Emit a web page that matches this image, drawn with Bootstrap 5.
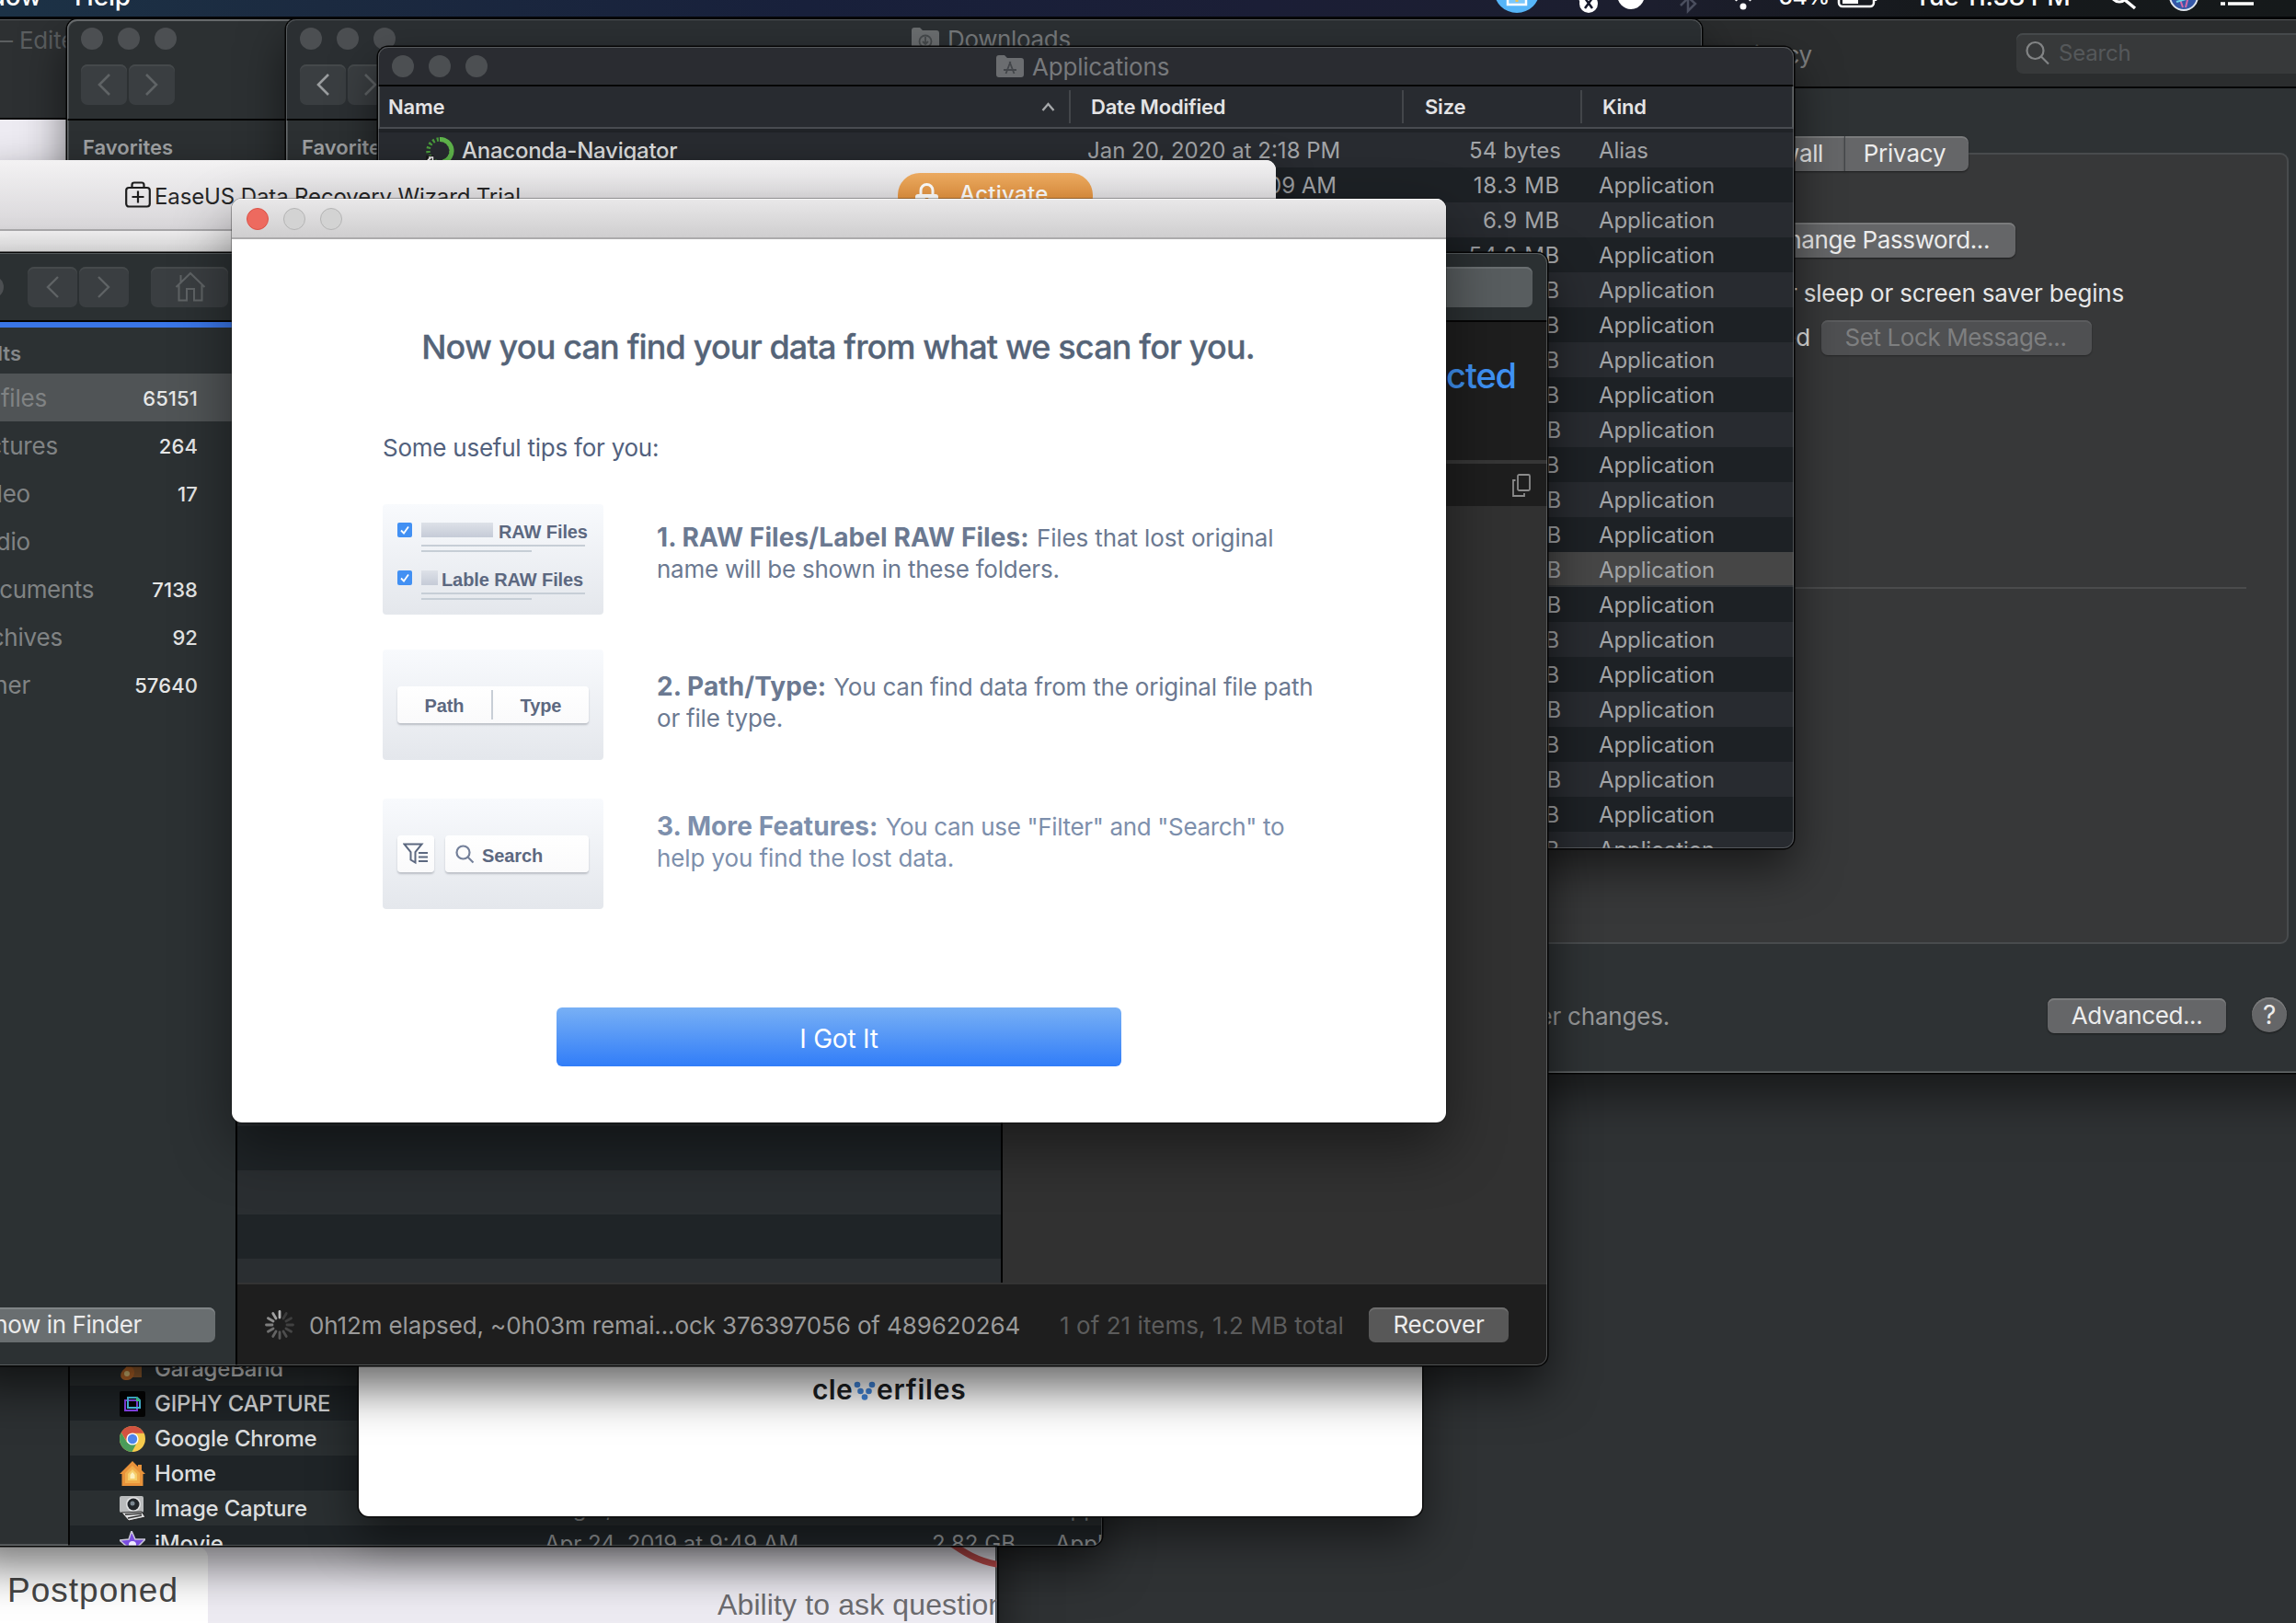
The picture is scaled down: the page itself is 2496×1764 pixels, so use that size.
<!DOCTYPE html>
<html lang="en">
<head>
<meta charset="utf-8">
<title>Desktop</title>
<link href="https://cdn.jsdelivr.net/npm/bootstrap@5.3.0/dist/css/bootstrap.min.css" rel="stylesheet">
<style>
  body { font-family: Inter, "Liberation Sans", sans-serif; font-size: 26px; line-height: 34px; letter-spacing: -.2px; background: #2f3234; color: #e6e6e6; }
  .desktop { width: 2496px; height: 1764px; white-space: nowrap; }
  svg { display: block; flex: none; }
  .win { position: absolute; overflow: hidden; border-radius: 11px; }
  .win-dark { background: #2c3032; box-shadow: inset 0 2px 0 #606365, inset 0 0 0 2px #4c5052, 0 0 0 1.5px #050505, 0 22px 50px rgba(0,0,0,.55); }
  .win-dark::after { content: ""; position: absolute; inset: 0; border: 1.5px solid rgba(130,134,136,.5); border-radius: 11px; pointer-events: none; }
  .dot { width: 24px; height: 24px; border-radius: 50%; background: #4c4f52; flex: none; }
  .tool { background: #3a3e41; border-radius: 7px; height: 44px; box-shadow: inset 0 2px 0 #45494b; flex: none; }
  .mbtn { background: #656668; color: #ececec; border-radius: 7px; height: 38px; box-shadow: inset 0 2px 0 #7a7b7c, 0 1px 2px rgba(0,0,0,.5); flex: none; display: flex; align-items: center; justify-content: center; letter-spacing: -.4px; }
  .mbtn.off { background: #4f5052; color: #7e7f80; box-shadow: inset 0 2px 0 #5b5c5e, 0 1px 2px rgba(0,0,0,.3); }

  /* menu bar */
  .menubar { position: absolute; inset: 0 0 auto 0; height: 20px; overflow: hidden; border-bottom: 2px solid #050608; background: linear-gradient(90deg, #1c3246 0, #1b2a40 14%, #18203b 35%, #1b1e36 55%, #1c1e2e 72%, #16191c 84%, #15191a 100%); color: #fff; font-size: 28px; font-weight: 500; }
  .menubar-in { height: 46px; margin-top: -27px; }

  /* browser */
  .browser { left: -60px; top: 21px; width: 1144px; height: 1760px; background: #edebf2; border-radius: 0; }
  .browser-bar { height: 109px; background: #2d3032; border-bottom: 2px solid #050505; color: #5b5e60; padding: 6px 0 0 48px; }
  .browser-page { height: 1551px; }
  .browser-foot { height: 100px; font-family: "Liberation Sans", sans-serif; }
  .postponed { flex: none; width: 286px; height: 100px; border-radius: 0 12px 0 0; background: #fff; color: #464646; font-size: 37px; letter-spacing: 1px; padding: 31px 32px 0 0; text-align: right; }
  .ask { color: #6c6b6f; font-size: 32px; letter-spacing: .12px; padding: 46px 0 0 554px; }

  /* preferences */
  .prefs { left: 1600px; top: 21px; width: 960px; height: 1145px; border-radius: 0; background: #2e3234; }
  .prefs-bar { height: 75px; background: #2b2d2e; border-bottom: 2px solid #070707; }
  .prefs-title { width: 370px; color: #7f8081; padding-top: 4px; }
  .prefs-search { width: 340px; margin-left: 222px; height: 44px; background: #37393a; color: #55585a; padding-left: 10px; gap: 9px; font-size: 24px; }
  .prefs-box { width: 888px; height: 860px; margin-top: 70px; background: #373839; border: 2px solid #484b4d; border-left: 0; border-radius: 0 9px 9px 0; }
  .prefs-box > .tabs { margin-top: -20px; width: 540px; }
  .prefs-foot { height: 156px; color: #979899; }

  /* file lists */
  .list-head { height: 46px; border-bottom: 2px solid #484b50; color: #e4e4e5; font-size: 22px; font-weight: 600; }
  .list-head > div + div { border-left: 2px solid #43464a; height: 36px; line-height: 36px; }
  .app-row { height: 38px; font-size: 24px; color: #a2a4a7; background: #282b30; padding-top: 2px; }
  .app-row:nth-child(even) { background: #1d2125; }
  .app-row.picked { background: #464646; border-bottom: 2px solid #34373a; padding-top: 4px; }
  .c-name { width: 751px; } .c-date { width: 362px; } .c-size { width: 194px; text-align: right; padding-right: 22px; letter-spacing: .7px; } .c-size.w { padding-right: 20px; }
  .c-kind { padding-left: 20px; letter-spacing: -.1px; }
  .app-row .c-date { padding-left: 20px; letter-spacing: 0; }
  .fav { font-size: 22px; font-weight: 600; color: #9fa1a3; letter-spacing: 0; }
  .apps { left: 411px; top: 51px; width: 1539px; height: 871px; background: #282b30; }
  .apps-bar { height: 43px; border-bottom: 2px solid #060606; background: #2a2c31; color: #77797c; }
  .lib { left: -40px; top: 1392px; width: 1238px; height: 288px; background: #2c3032; }
  .lib-row { height: 38px; background: #2a2f31; font-size: 24px; padding-top: 1px; }
  .lib-row:nth-child(even) { background: #1f2427; }
  .lib-name { flex: none; font-weight: 500; color: #dcdedf; width: 424px; margin-left: 10px; }
  .lib-date { width: 421px; } .lib-size { width: 134px; }
  .lib-date, .lib-size, .lib-kind { color: #8d9092; letter-spacing: 0; flex: none; }

  /* cleverfiles + EaseUS */
  .clever { left: 390px; top: 1400px; width: 1156px; height: 248px; background: #fff; box-shadow: 0 0 0 1.5px #0a0a0a, 0 22px 50px rgba(0,0,0,.5); color: #1d2124; font-size: 30px; font-weight: 600; padding: 93px 0 0 493px; }
  .ease { left: -20px; top: 174px; width: 1407px; height: 700px; background: #fff; box-shadow: 0 16px 44px rgba(0,0,0,.45); color: #262626; }
  .ease-bar { height: 77px; background: linear-gradient(#f3f2f3, #d8d6d9); border-bottom: 2px solid #a9a8aa; padding-left: 156px; font-size: 24px; letter-spacing: -.12px; }
  .ease-body { height: 40px; background: linear-gradient(#f0eff0, #dadada); }
  .activate { width: 212px; height: 50px; border-radius: 24px; background: linear-gradient(#efad62, #e38c35 75%); color: #fff; font-weight: 500; letter-spacing: .3px; margin: 14px 199px 0 auto; padding: 0 0 4px 19px; gap: 23px; align-self: flex-start; }

  /* disk drill */
  .drill { left: -40px; top: 275px; width: 1722px; height: 1209px; box-shadow: inset 0 2px 0 #606365, 0 0 0 1.5px #050505, 0 24px 52px rgba(0,0,0,.62); }
  .drill-bar { height: 75px; border-bottom: 2px solid #050505; background: #2b3032; padding: 0 16px 0 20px; }
  .drill-side { width: 298px; border-right: 2px solid #000; background: #2c3133; color: #808384; }
  .side-row { height: 52px; padding: 2px 41px 0 0; }
  .side-row > span:first-child { text-align: right; }
  .side-row.picked { background: #505456; }
  .cnt { font-size: 22px; font-weight: 500; color: #e6e7e7; letter-spacing: .1px; }
  .drill-rows { width: 832px; height: 1044px; border-right: 2px solid #000; background: linear-gradient(#1f2427 50%, #2a2e31 50%) 0 10px / 100% 96px; }
  .drill-prev { background: #313131; }
  .drill-head { height: 150px; background: #1e1e1e; color: #3f92f4; font-size: 38px; font-weight: 500; letter-spacing: -1.1px; padding: 41px 34px 0 0; text-align: right; }
  .drill-sub { height: 50px; border-top: 4px solid #363636; background: #1e1e1e; padding-right: 18px; }
  .drill-foot { height: 90px; background: #1e1e1e; border-top: 2px solid #333; padding-left: 30px; color: #9a9a9a; letter-spacing: -.12px; }

  /* tips dialog */
  .tips { left: 252px; top: 216px; width: 1320px; height: 1004px; background: #fff; box-shadow: 0 0 0 1px rgba(0,0,0,.3), 0 26px 64px rgba(0,0,0,.45); color: #52617d; }
  .tips-bar { height: 44px; background: linear-gradient(#e9e8e9, #cfcecf); border-bottom: 2px solid #acabac; padding: 1px 0 0 16px; gap: 16px; box-shadow: inset 0 1px 0 #f6f6f6; }
  .tips-bar .dot { background: #d3d3d3; border: 1.5px solid #b4b4b4; }
  .tips-bar .dot:first-child { background: #ed6a5f; border-color: #dc5247; }
  .tips-title { font-size: 36px; font-weight: 500; line-height: 44px; letter-spacing: -.85px; margin-top: 95px; padding-right: 2px; color: #556478; text-align: center; -webkit-text-stroke: .3px #556478; }
  .tips-lead { margin: 71px 0 44px 164px; letter-spacing: -.24px; }
  .tip { height: 120px; margin-left: 164px; gap: 58px; color: #6b7991; }
  .tip b { font-size: 28px; letter-spacing: .1px; margin-right: 1px; }
  .thumb { width: 240px; height: 120px; border-radius: 4px; background: linear-gradient(#f8fafd, #e4e7ec); font: 700 20px/22px "Liberation Sans", sans-serif; letter-spacing: -.1px; color: #5c6880; flex: none; padding: 16px; }
  .pill { background: linear-gradient(#fff, #fafafb); height: 40px; border-radius: 4px; box-shadow: 0 2px 2px rgba(120,125,135,.4); }
  .bars { margin-left: 26px; }
  .bars i { display: block; height: 2px; background: #c6ced6; margin-bottom: 4px; width: 178px; }
  .bars i + i { width: 120px; }
  .blk { background: linear-gradient(#dde1e8, #c5cbd7); height: 16px; margin-left: 10px; }
  .gotit { width: 614px; height: 64px; border-radius: 6px; background: linear-gradient(#78b0f5, #317df8); color: #fff; font-size: 28px; letter-spacing: -.2px; margin: 107px auto 0; border: 0; padding: 4px 0 0; }
</style>
<script src="https://cdn.jsdelivr.net/npm/bootstrap@5.3.0/dist/js/bootstrap.bundle.min.js"></script>
</head>
<body>
<main class="desktop position-relative overflow-hidden">

  <!-- browser window at the bottom left -->
  <section class="win win-dark browser">
    <div class="browser-bar">— Edited</div>
    <div class="browser-page"></div>
    <div class="browser-foot d-flex">
      <div class="postponed">Postponed</div>
      <div class="ask">Ability to ask questions</div>
    </div>
    <svg class="position-absolute" style="left:1060px;top:1640px" width="90" height="60" viewBox="0 0 90 60"><path d="M22 8C42 22 60 37 90 40" fill="none" stroke="#c9504f" stroke-width="7"/></svg>
  </section>

  <!-- Security & Privacy -->
  <section class="win win-dark prefs">
    <div class="prefs-bar d-flex align-items-center">
      <div class="prefs-title text-end">Privacy</div>
      <div class="prefs-search tool d-flex align-items-center">
        <svg width="27" height="27" viewBox="0 0 27 27" fill="none" stroke="#828485" stroke-width="2.2"><circle cx="10.500" cy="11" r="9"/><path d="M17 17.500l8 8"/></svg>
        <span>Search</span>
      </div>
    </div>
    <div class="prefs-box">
      <div class="tabs d-flex">
        <div class="mbtn rounded-end-0 justify-content-end" style="width:405px;padding-right:23px">Firewall</div>
        <div class="mbtn rounded-start-0 border-start border-dark border-opacity-50" style="width:135px;padding-right:5px;letter-spacing:-.2px">Privacy</div>
      </div>
      <div class="mbtn justify-content-end" style="width:321px;margin:56px 0 0 270px;padding-right:28px">Change Password...</div>
      <div class="text-end" style="width:709px;margin-top:22px">Require password after sleep or screen saver begins</div>
      <div class="d-flex align-items-center" style="margin-top:12px">
        <div class="text-end" style="width:368px">locked</div>
        <div class="mbtn off" style="width:294px;margin-left:12px;padding-right:2px">Set Lock Message...</div>
      </div>
      <div style="height:2px;width:842px;margin-top:252px;background:#4a4b4c"></div>
    </div>
    <div class="prefs-foot d-flex align-items-center">
      <div class="text-end" style="width:215px;padding-top:2px">further changes.</div>
      <div class="mbtn" style="width:194px;margin-left:411px">Advanced...</div>
      <div class="mbtn rounded-circle" style="width:38px;margin:-3px 0 0 28px;font-size:28px">?</div>
    </div>
  </section>

  <!-- Finder list at the lower left -->
  <section class="win win-dark lib d-flex">
    <div style="flex:none;width:116px;border-right:2px solid #060606"></div>
    <div style="flex:none;width:1122px;padding-top:76px">
      <div class="lib-row d-flex align-items-center" style="padding-left:54px">
        <svg width="28" height="28" viewBox="0 0 28 28"><rect x="7" y="0" width="17" height="23" fill="#9c6434"/><path d="M13 0v12c5 2 4 14-5 14S0 18 5 14l3-3 1-11z" fill="#c9702c"/><circle cx="8" cy="19" r="3" fill="#f1d488"/></svg>
        <span class="lib-name">GarageBand</span>
      </div>
      <div class="lib-row d-flex align-items-center" style="padding-left:54px">
        <svg width="28" height="28" viewBox="0 0 28 28"><rect width="28" height="28" rx="2" fill="#050505"/><rect x="6" y="10" width="13" height="11" fill="none" stroke="#8b45f2" stroke-width="2"/><path d="M9 7h10l3 3v8H9z" fill="none" stroke="#4cc9f0" stroke-width="2"/><path d="M18 6l5 5h-5z" fill="#46e08a"/></svg>
        <span class="lib-name">GIPHY CAPTURE</span>
      </div>
      <div class="lib-row d-flex align-items-center" style="padding-left:54px">
        <svg width="28" height="28" viewBox="0 0 28 28"><circle cx="14" cy="14" r="14" fill="#f7cb4d"/><path d="M14 0a14 14 0 0 1 12.500 7.700H14L7.500 16 1.800 7A14 14 0 0 1 14 0z" fill="#d75442"/><path d="M1.800 7l6.500 11L18 19.500 13.500 28A14 14 0 0 1 1.800 7z" fill="#4b9c5a"/><circle cx="14" cy="14" r="6.600" fill="#fff"/><circle cx="14" cy="14" r="5.200" fill="#4f86ec"/></svg>
        <span class="lib-name">Google Chrome</span>
      </div>
      <div class="lib-row d-flex align-items-center" style="padding-left:54px">
        <svg width="28" height="28" viewBox="0 0 28 28"><path d="M14 0l6 6V4h4v6l4 4h-2.500v13h-23V14H0z" fill="#e8923a"/><path d="M14 5l8 8v11H6V13z" fill="#f0ad4c"/><path d="M14 9l5 5v7H9v-7z" fill="#f6cf6c"/><path d="M14 12l2.500 3v4h-5v-4z" fill="#fdf1c0"/></svg>
        <span class="lib-name">Home</span>
      </div>
      <div class="lib-row d-flex align-items-center" style="padding-left:54px">
        <svg width="28" height="28" viewBox="0 0 28 28"><rect x="0" y="0" width="26" height="18" rx="2" fill="#b9bbbc"/><circle cx="15" cy="9" r="8" fill="#e2e3e4"/><circle cx="15" cy="9" r="6.500" fill="#22262a"/><circle cx="14" cy="8" r="2.500" fill="#7b8791"/><path d="M2 18l8 9 18-4-4-6z" fill="#dfe0e1" stroke="#222" stroke-width="1"/><path d="M6 20l18-1M9 24l15-3" stroke="#333" stroke-width="1.500"/></svg>
        <span class="lib-name">Image Capture</span>
        <span class="lib-date">Aug 5, 2019 at 8:12 AM</span><span class="lib-size">3.1 MB</span><span class="lib-kind">Application</span>
      </div>
      <div class="lib-row d-flex align-items-center" style="padding-left:54px">
        <svg width="28" height="28" viewBox="0 0 28 28"><path d="M13 0l4 9 11 0-8 8 3 11-9-6-9 6 3-11-8-7 10-1z" fill="#7a4de0" stroke="#c9c6d8" stroke-width="1.500"/><circle cx="14" cy="15" r="4" fill="#eee9ff"/></svg>
        <span class="lib-name">iMovie</span>
        <span class="lib-date">Apr 24, 2019 at 9:49 AM</span><span class="lib-size">2.82 GB</span><span class="lib-kind">Application</span>
      </div>
    </div>
  </section>

  <!-- cleverfiles page -->
  <section class="win clever">
    <div class="d-flex align-items-center">
      <span style="letter-spacing:.3px">cle</span>
      <svg width="24" height="22" viewBox="0 0 24 22" fill="#4287dc" style="margin:2px 1px 0 1px"><circle cx="4" cy="5" r="3.300"/><circle cx="20" cy="5" r="3.300"/><circle cx="7.500" cy="12" r="3.300"/><circle cx="16.500" cy="12" r="3.300"/><circle cx="12" cy="18.500" r="3.300"/></svg>
      <span style="letter-spacing:.8px">erfiles</span>
    </div>
  </section>

  <!-- first Finder window -->
  <section class="win win-dark" style="left:73px;top:21px;width:900px;height:800px">
    <div style="height:110px;border-bottom:2px solid #060606;padding:9px 15px">
      <div class="d-flex" style="gap:16px"><i class="dot"></i><i class="dot"></i><i class="dot"></i></div>
      <div class="d-flex" style="gap:2px;margin-top:16px">
        <div class="tool d-flex align-items-center justify-content-center" style="width:50px"><svg width="16" height="26" viewBox="0 0 16 26" fill="none" stroke="#5f6365" stroke-width="2.600"><path d="M14 2L3 13l11 11"/></svg></div>
        <div class="tool d-flex align-items-center justify-content-center" style="width:50px"><svg width="16" height="26" viewBox="0 0 16 26" fill="none" stroke="#5f6365" stroke-width="2.600"><path d="M2 2l11 11L2 24"/></svg></div>
      </div>
    </div>
    <div class="fav" style="padding:12px 17px">Favorites</div>
  </section>

  <!-- second Finder window: Downloads -->
  <section class="win win-dark" style="left:311px;top:21px;width:1539px;height:800px">
    <div style="height:110px;border-bottom:2px solid #060606;padding:9px 15px;background:#2b2f32">
      <div class="d-flex align-items-center" style="gap:16px;height:24px"><i class="dot"></i><i class="dot"></i><i class="dot"></i>
        <svg width="30" height="26" viewBox="0 0 30 26" style="margin:2px 0 0 545px"><path d="M0 3q0-3 3-3h6l3 3h15q3 0 3 3v17q0 3-3 3H3q-3 0-3-3z" fill="#6a6d6f"/><circle cx="15" cy="15" r="6.500" fill="none" stroke="#45494b" stroke-width="1.800"/><path d="M15 10v8m-3-3l3 3 3-3" stroke="#45494b" stroke-width="1.800" fill="none"/></svg>
        <span style="color:#75787a;margin:2px 0 0 -7px;letter-spacing:-.35px">Downloads</span>
      </div>
      <div class="d-flex" style="gap:2px;margin-top:16px">
        <div class="tool d-flex align-items-center justify-content-center" style="width:50px"><svg width="16" height="26" viewBox="0 0 16 26" fill="none" stroke="#9a9d9f" stroke-width="2.600"><path d="M14 2L3 13l11 11"/></svg></div>
        <div class="tool d-flex align-items-center justify-content-center" style="width:50px"><svg width="16" height="26" viewBox="0 0 16 26" fill="none" stroke="#5f6365" stroke-width="2.600"><path d="M2 2l11 11L2 24"/></svg></div>
      </div>
    </div>
    <div class="fav" style="padding:12px 17px">Favorites</div>
  </section>

  <!-- Applications -->
  <section class="win win-dark apps">
    <div class="apps-bar d-flex align-items-center" style="padding-left:15px;gap:16px"><i class="dot"></i><i class="dot"></i><i class="dot"></i>
      <svg width="30" height="24" viewBox="0 0 30 24" style="margin-left:537px"><path d="M0 3q0-3 3-3h6l3 3h15q3 0 3 3v15q0 3-3 3H3q-3 0-3-3z" fill="#6b6d70"/><path d="M15.500 7l-5 13M14.500 7l5 13M8 16h14" stroke="#43464a" stroke-width="1.800" fill="none"/></svg>
      <span style="margin:3px 0 0 -7px;letter-spacing:-.2px">Applications</span>
    </div>
    <div class="list-head d-flex align-items-center">
      <div class="c-name d-flex align-items-center justify-content-between" style="padding:0 15px 0 11px"><span>Name</span><svg width="15" height="10" viewBox="0 0 15 10" fill="none" stroke="#a5a7a9" stroke-width="2.400"><path d="M1.500 9l6-7 6 7"/></svg></div>
      <div class="c-date" style="padding-left:22px">Date Modified</div>
      <div class="flex-none" style="width:194px;padding-left:23px">Size</div>
      <div style="padding-left:22px">Kind</div>
    </div>
    <div style="height:4px;background:#202327"></div>
    <div>
      <div class="app-row d-flex align-items-center"><div class="c-name d-flex align-items-center" style="padding-left:51px;color:#dcdddd;font-weight:500">
        <svg width="32" height="32" viewBox="0 0 32 32"><circle cx="16" cy="16" r="12.500" fill="none" stroke="#4a9c3c" stroke-width="4.500" stroke-dasharray="2.200 2.400"/><path d="M16 3.500A12.500 12.500 0 0 1 20 28" fill="none" stroke="#5fb54b" stroke-width="5"/><rect x="1" y="21" width="9" height="10" fill="#1c1c1c"/><path d="M2.500 29c0-3 1-4.500 4-4.500M4 23h4.500v4.500" fill="none" stroke="#fff" stroke-width="1.500"/></svg>
        <span style="margin-left:8px;letter-spacing:-.25px">Anaconda-Navigator</span></div><div class="c-date">Jan 20, 2020 at 2:18 PM</div><div class="c-size" style="padding-right:21px;letter-spacing:.1px">54 bytes</div><div class="c-kind">Alias</div></div>
      <div class="app-row d-flex align-items-center"><div class="c-name"></div><div class="c-date">Dec 11, 2019 at 9:09 AM</div><div class="c-size">18.3 MB</div><div class="c-kind">Application</div></div>
      <div class="app-row d-flex align-items-center"><div class="c-name"></div><div class="c-date"></div><div class="c-size">6.9 MB</div><div class="c-kind">Application</div></div>
      <div class="app-row d-flex align-items-center"><div class="c-name"></div><div class="c-date"></div><div class="c-size">54.8 MB</div><div class="c-kind">Application</div></div>
      <div class="app-row d-flex align-items-center"><div class="c-name"></div><div class="c-date"></div><div class="c-size">MB</div><div class="c-kind">Application</div></div>
      <div class="app-row d-flex align-items-center"><div class="c-name"></div><div class="c-date"></div><div class="c-size">MB</div><div class="c-kind">Application</div></div>
      <div class="app-row d-flex align-items-center"><div class="c-name"></div><div class="c-date"></div><div class="c-size">MB</div><div class="c-kind">Application</div></div>
      <div class="app-row d-flex align-items-center"><div class="c-name"></div><div class="c-date"></div><div class="c-size">MB</div><div class="c-kind">Application</div></div>
      <div class="app-row d-flex align-items-center"><div class="c-name"></div><div class="c-date"></div><div class="c-size w">MB</div><div class="c-kind">Application</div></div>
      <div class="app-row d-flex align-items-center"><div class="c-name"></div><div class="c-date"></div><div class="c-size">MB</div><div class="c-kind">Application</div></div>
      <div class="app-row d-flex align-items-center"><div class="c-name"></div><div class="c-date"></div><div class="c-size w">MB</div><div class="c-kind">Application</div></div>
      <div class="app-row d-flex align-items-center"><div class="c-name"></div><div class="c-date"></div><div class="c-size w">MB</div><div class="c-kind">Application</div></div>
      <div class="app-row picked d-flex align-items-center"><div class="c-name"></div><div class="c-date"></div><div class="c-size w">MB</div><div class="c-kind">Application</div></div>
      <div class="app-row d-flex align-items-center"><div class="c-name"></div><div class="c-date"></div><div class="c-size w">MB</div><div class="c-kind">Application</div></div>
      <div class="app-row d-flex align-items-center"><div class="c-name"></div><div class="c-date"></div><div class="c-size">MB</div><div class="c-kind">Application</div></div>
      <div class="app-row d-flex align-items-center"><div class="c-name"></div><div class="c-date"></div><div class="c-size">MB</div><div class="c-kind">Application</div></div>
      <div class="app-row d-flex align-items-center"><div class="c-name"></div><div class="c-date"></div><div class="c-size w">MB</div><div class="c-kind">Application</div></div>
      <div class="app-row d-flex align-items-center"><div class="c-name"></div><div class="c-date"></div><div class="c-size">MB</div><div class="c-kind">Application</div></div>
      <div class="app-row d-flex align-items-center"><div class="c-name"></div><div class="c-date"></div><div class="c-size w">MB</div><div class="c-kind">Application</div></div>
      <div class="app-row d-flex align-items-center"><div class="c-name"></div><div class="c-date"></div><div class="c-size">MB</div><div class="c-kind">Application</div></div>
      <div class="app-row d-flex align-items-center"><div class="c-name"></div><div class="c-date"></div><div class="c-size">MB</div><div class="c-kind">Application</div></div>
    </div>
  </section>

  <!-- EaseUS -->
  <section class="win ease">
    <div class="ease-bar d-flex align-items-center">
      <svg width="28" height="29" viewBox="0 0 28 29" fill="none" stroke="#1d1d1d" stroke-width="2.200"><rect x="1.200" y="7" width="25.600" height="20.500" rx="3"/><path d="M7.500 7V4q0-2.500 2.500-2.500h8q2.500 0 2.500 2.500v3M14 10.500v13M7.500 17h13"/></svg>
      <span style="margin:5px 0 0 4px">EaseUS Data Recovery Wizard Trial</span>
      <div class="activate d-flex align-items-center">
        <svg width="25" height="28" viewBox="0 0 25 28" style="margin-top:3px"><rect y="12" width="25" height="16" rx="3" fill="#fff"/><path d="M6 13V8a6.500 6.500 0 0 1 13 0v5" fill="none" stroke="#fff" stroke-width="3"/><path d="M12.500 16v7" stroke="#e8963f" stroke-width="3.500"/></svg>
        <span>Activate</span>
      </div>
    </div>
    <div class="ease-body"></div>
  </section>

  <!-- Disk Drill -->
  <section class="win win-dark drill">
    <div class="drill-bar d-flex align-items-center">
      <i class="dot"></i>
      <div class="tool d-flex align-items-center justify-content-center" style="width:54px;margin-left:26px"><svg width="16" height="26" viewBox="0 0 16 26" fill="none" stroke="#5f6365" stroke-width="2.400"><path d="M14 2L3 13l11 11"/></svg></div>
      <div class="tool d-flex align-items-center justify-content-center" style="width:54px;margin-left:2px"><svg width="16" height="26" viewBox="0 0 16 26" fill="none" stroke="#5f6365" stroke-width="2.400"><path d="M2 2l11 11L2 24"/></svg></div>
      <div class="tool d-flex align-items-center justify-content-center" style="width:84px;margin-left:24px;padding-left:2px"><svg width="34" height="33" viewBox="0 0 34 33" fill="none" stroke="#5f6365" stroke-width="2"><path d="M1.500 17L17 2l15.500 15M6.500 12V4M4.500 15v16.500h8.500V19h8v12.500h8.500V15"/></svg></div>
      <div class="tool ms-auto" style="width:160px;background:#585d5f;box-shadow:inset 0 2px 0 #6a6f71"></div>
    </div>
    <div class="d-flex">
      <div class="drill-side d-flex flex-column">
        <div style="height:6px;background:#3a76e8"></div>
        <div class="fav" style="height:50px;padding-top:11px;width:63px;color:#85888a;direction:rtl">Results</div>
        <div class="side-row picked d-flex align-items-center justify-content-between"><span style="width:91px">All files</span><span class="cnt">65151</span></div>
        <div class="side-row d-flex align-items-center justify-content-between"><span style="width:103px">Pictures</span><span class="cnt">264</span></div>
        <div class="side-row d-flex align-items-center justify-content-between"><span style="width:73px">Video</span><span class="cnt">17</span></div>
        <div class="side-row d-flex align-items-center justify-content-between"><span style="width:73px">Audio</span></div>
        <div class="side-row d-flex align-items-center justify-content-between"><span style="width:142px;letter-spacing:-.4px">Documents</span><span class="cnt">7138</span></div>
        <div class="side-row d-flex align-items-center justify-content-between"><span style="width:108px">Archives</span><span class="cnt">92</span></div>
        <div class="side-row d-flex align-items-center justify-content-between"><span style="width:73px">Other</span><span class="cnt">57640</span></div>
        <div class="mbtn justify-content-end" style="width:254px;margin:auto 0 25px 20px;padding-right:80px;background:#696e70;box-shadow:inset 0 2px 0 #808587">Show in Finder</div>
      </div>
      <div class="flex-fill">
        <div class="d-flex">
          <div class="drill-rows"></div>
          <div class="drill-prev flex-fill">
            <div class="drill-head">Selected</div>
            <div class="drill-sub d-flex align-items-center justify-content-end"><svg width="20" height="25" viewBox="0 0 20 25" fill="none" stroke="#8b8b8b" stroke-width="1.800"><rect x="6" y="1" width="13" height="17" rx="1.500"/><path d="M3.500 7H1v17h12v-3"/></svg></div>
          </div>
        </div>
        <div class="drill-foot d-flex align-items-center">
          <svg width="32" height="32" viewBox="-16 -16 32 32" stroke-width="2.800" stroke-linecap="round"><path d="M0-8v-6.500" stroke="#b5b5b5"/><path d="M0-8v-6.500" stroke="#3c3c3c" transform="rotate(30)"/><path d="M0-8v-6.500" stroke="#3e3e3e" transform="rotate(60)"/><path d="M0-8v-6.500" stroke="#414141" transform="rotate(90)"/><path d="M0-8v-6.500" stroke="#464646" transform="rotate(120)"/><path d="M0-8v-6.500" stroke="#4d4d4d" transform="rotate(150)"/><path d="M0-8v-6.500" stroke="#585858" transform="rotate(180)"/><path d="M0-8v-6.500" stroke="#636363" transform="rotate(210)"/><path d="M0-8v-6.500" stroke="#707070" transform="rotate(240)"/><path d="M0-8v-6.500" stroke="#7e7e7e" transform="rotate(270)"/><path d="M0-8v-6.500" stroke="#8d8d8d" transform="rotate(300)"/><path d="M0-8v-6.500" stroke="#a0a0a0" transform="rotate(330)"/></svg>
          <span style="width:816px;margin:2px 0 0 16px">0h12m elapsed, ~0h03m remai...ock 376397056 of 489620264</span>
          <span style="width:336px;margin-top:2px;color:#5c5c5c;letter-spacing:.05px">1 of 21 items, 1.2 MB total</span>
          <div class="mbtn" style="width:152px;background:#585858;box-shadow:inset 0 2px 0 #6e6e6e;letter-spacing:-.2px">Recover</div>
        </div>
      </div>
    </div>
  </section>

  <!-- tips dialog -->
  <section class="win tips">
    <div class="tips-bar d-flex align-items-center"><i class="dot"></i><i class="dot"></i><i class="dot"></i></div>
    <div class="tips-title">Now you can find your data from what we scan for you.</div>
    <div class="tips-lead">Some useful tips for you:</div>

    <div class="tip d-flex" style="margin-bottom:38px">
      <div class="thumb" style="padding-top:20px">
        <div class="d-flex align-items-center" style="height:16px"><svg width="16" height="16" viewBox="0 0 16 16"><rect width="16" height="16" rx="2" fill="#4290f3"/><path d="M4 8.500l3 3L12 4.500" fill="none" stroke="#fff" stroke-width="1.800"/></svg><div class="blk" style="width:78px"></div><span style="margin:3px 0 0 6px">RAW Files</span></div>
        <div class="bars" style="margin-top:8px"><i></i><i></i></div>
        <div class="d-flex align-items-center" style="height:16px;margin-top:20px"><svg width="16" height="16" viewBox="0 0 16 16"><rect width="16" height="16" rx="2" fill="#4290f3"/><path d="M4 8.500l3 3L12 4.500" fill="none" stroke="#fff" stroke-width="1.800"/></svg><div class="blk" style="width:18px"></div><span style="margin:3px 0 0 4px">Lable RAW Files</span></div>
        <div class="bars" style="margin-top:8px"><i></i><i></i></div>
      </div>
      <div style="margin-top:19px"><b>1. RAW Files/Label RAW Files:</b> <span style="letter-spacing:-.12px">Files that lost original</span><br><span style="letter-spacing:-.24px">name will be shown in these folders.</span></div>
    </div>

    <div class="tip d-flex" style="margin-bottom:42px">
      <div class="thumb" style="padding-top:40px">
        <div class="pill d-flex align-items-center text-center"><span style="width:102px;padding-top:2px">Path</span><span style="width:2px;height:32px;background:#c8ced6"></span><span style="width:104px;padding-top:2px">Type</span></div>
      </div>
      <div style="margin-top:23px"><b>2. Path/Type:</b> You can find data from the original file path<br>or file type.</div>
    </div>

    <div class="tip d-flex" style="color:#7d8fac">
      <div class="thumb d-flex" style="padding-top:40px;gap:12px">
        <div class="pill d-flex align-items-center justify-content-center" style="width:40px"><svg width="28" height="24" viewBox="0 0 28 24" fill="none" stroke="#5c6880" stroke-width="2"><path d="M1.500 1.500h19L13.500 10v11.500l-5-3V10z"/><path d="M17 11h10M17 15.500h10M17 20h10"/></svg></div>
        <div class="pill d-flex align-items-center" style="width:156px;padding-left:11px"><svg width="21" height="21" viewBox="0 0 21 21" fill="none" stroke="#74809a" stroke-width="2.200"><circle cx="8.500" cy="8.500" r="7"/><path d="M13.500 13.500l6 6"/></svg><span style="margin:3px 0 0 8px">Search</span></div>
      </div>
      <div style="margin-top:13px"><b>3. More Features:</b> <span style="letter-spacing:-.34px">You can use "Filter" and "Search" to</span><br><span style="letter-spacing:-.1px">help you find the lost data.</span></div>
    </div>

    <button class="gotit d-block">I Got It</button>
  </section>

  <!-- menu bar -->
  <nav class="menubar">
    <div class="menubar-in d-flex align-items-center">
      <div style="width:45px;direction:rtl">Window</div>
      <div style="margin-left:36px;width:1539px">Help</div>
      <svg width="300" height="46" viewBox="1620 -27 300 46">
        <circle cx="1649" cy="-11" r="25" fill="#56b5f8"/><rect x="1639" y="-18" width="20" height="23" fill="#7cc8fb" stroke="#fff" stroke-width="2.500"/><path d="M1649-18v20" stroke="#f3c04a" stroke-width="3"/>
        <path d="M1714-6h10l4 8-8 6z" fill="#fff"/><circle cx="1727" cy="4" r="10" fill="#fff"/><path d="M1723-2l8 11M1731-2l-8 11" stroke="#14182a" stroke-width="2.500"/>
        <ellipse cx="1773" cy="-6" rx="15" ry="16" fill="#fff"/>
        <path d="M1827-10l16 14-8 8v-24M1827 6l10-10" fill="none" stroke="#4a4e5e" stroke-width="2.500"/>
        <circle cx="1895" cy="7" r="3.500" fill="#fff"/><path d="M1886 0q9-8 18 0" fill="none" stroke="#fff" stroke-width="4"/>
      </svg>
      <div class="text-end" style="width:69px;font-size:25px;letter-spacing:-.4px">64%</div>
      <svg width="44" height="46" viewBox="1997 -27 44 46" style="margin-left:8px"><rect x="1999" y="-12" width="38" height="19" rx="4" fill="none" stroke="#fff" stroke-width="2.500"/><rect x="2003" y="-8" width="17" height="12" fill="#fff"/><path d="M2039-5v6" stroke="#fff" stroke-width="2.500"/></svg>
      <div style="width:203px;margin-left:40px;letter-spacing:-.45px">Tue 11:38 PM</div>
      <svg width="180" height="46" viewBox="2284 -27 180 46"><circle cx="2304" cy="-7" r="9" fill="none" stroke="#fff" stroke-width="3"/><path d="M2310 0l11 9" stroke="#fff" stroke-width="3.500"/><circle cx="2374" cy="-4" r="15" fill="#3558a8" stroke="#dfe6ee" stroke-width="2"/><path d="M2368-6l5 14M2380-8l-4 16" stroke="#d46aa8" stroke-width="2"/><path d="M2366 2l14-4" stroke="#6fd3e6" stroke-width="2"/><path d="M2414 4h5M2422 4h28" stroke="#fff" stroke-width="3.500"/></svg>
    </div>
  </nav>
</main>
</body>
</html>
